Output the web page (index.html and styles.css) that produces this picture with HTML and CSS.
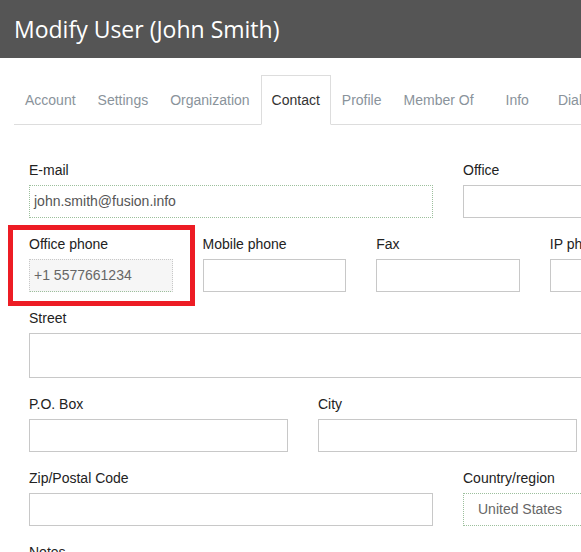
FILE: index.html
```html
<!DOCTYPE html>
<html lang="en">
  <head>
    <meta charset="UTF-8" />
    <title>Modify User</title>
    <link rel="stylesheet" href="styles.css">
  </head>
  <body>
    <div class="header">Modify User (John Smith)</div>

    <div class="tabs">
      <span class="tab">Account</span>
      <span class="tab">Settings</span>
      <span class="tab">Organization</span>
      <span class="tab active">Contact</span>
      <span class="tab">Profile</span>
      <span class="tab">Member Of</span>
      <span class="tab wide">Info</span>
      <span class="tab">Dial-in</span>
    </div>

    <form class="form">
      <div class="row row-main">
        <div class="field">
          <label>E-mail</label>
          <div class="input dotted">john.smith@fusion.info</div>
        </div>
        <div class="field">
          <label>Office</label>
          <div class="input"></div>
        </div>
      </div>

      <div class="row row-quarter">
        <div class="field">
          <label>Office phone</label>
          <div class="input dotted readonly">+1 5577661234</div>
        </div>
        <div class="field">
          <label>Mobile phone</label>
          <div class="input"></div>
        </div>
        <div class="field">
          <label>Fax</label>
          <div class="input"></div>
        </div>
        <div class="field">
          <label>IP phone</label>
          <div class="input"></div>
        </div>
      </div>

      <div class="row">
        <div class="field">
          <label>Street</label>
          <div class="input tall"></div>
        </div>
      </div>

      <div class="row row-half">
        <div class="field">
          <label>P.O. Box</label>
          <div class="input"></div>
        </div>
        <div class="field">
          <label>City</label>
          <div class="input"></div>
        </div>
      </div>

      <div class="row row-main">
        <div class="field">
          <label>Zip/Postal Code</label>
          <div class="input"></div>
        </div>
        <div class="field">
          <label>Country/region</label>
          <div class="input dotted select">United States</div>
        </div>
      </div>

      <div class="row">
        <div class="field">
          <label>Notes</label>
        </div>
      </div>
    </form>

    <div class="highlight"></div>
  </body>
</html>
```

FILE: styles.css
```css
html,
body {
  margin: 0;
  overflow: hidden;
  background: white;
}
body {
  font-family: "Liberation Sans", Arial, sans-serif;
  font-size: 14px;
  color: #222;
  width: 581px;
  height: 552px;
  position: relative;
}
.header {
  background-color: #555;
  color: white;
  font-family: "Open Sans", "Noto Sans", sans-serif;
  font-size: 23px;
  height: 58px;
  line-height: 58px;
  padding-left: 14px;
  white-space: nowrap;
}
.tabs {
  display: flex;
  margin: 17px 0 0 14px;
  border-bottom: 1px solid #ddd;
  white-space: nowrap;
}
.tab {
  color: #8a939b;
  padding: 17px 11px 16px 11px;
  line-height: 17px;
  margin-bottom: -1px;
}
.tab.wide {
  padding: 17px 18px 16px 21px;
}
.tab.active {
  color: #333;
  background: white;
  border: 1px solid #ddd;
  border-bottom: 1px solid white;
  padding: 16px 10px 15px 10px;
}
.form {
  padding: 36px 0 0 29px;
  width: 800px;
}
.row {
  display: flex;
  gap: 30px;
  margin-bottom: 17px;
}
.field {
  display: flex;
  flex-direction: column;
  flex: 1;
}
.row-main .field:first-child {
  flex: 0 0 404px;
}
.row-quarter .field {
  flex: 0 0 143.6px;
}
.row-half .field {
  flex: 0 0 259px;
}
label {
  display: block;
  line-height: 18px;
  margin-bottom: 6px;
}
.input {
  box-sizing: border-box;
  height: 33px;
  border: 1px solid #c8c8c8;
  line-height: 31px;
  padding: 0 4px;
  color: #555;
  white-space: nowrap;
}
.input.tall {
  height: 45px;
}
.input.dotted {
  border: 1px dotted #9cbf9c;
}
.input.readonly {
  background: #f6f6f6;
  border-color: #c8c8c8;
  border-bottom-color: #9cbf9c;
  color: #666;
}
.input.select {
  padding-left: 14px;
  color: #666;
}
.highlight {
  position: absolute;
  left: 8px;
  top: 225px;
  width: 177px;
  height: 71px;
  border: 5px solid #ed1c24;
}
```
